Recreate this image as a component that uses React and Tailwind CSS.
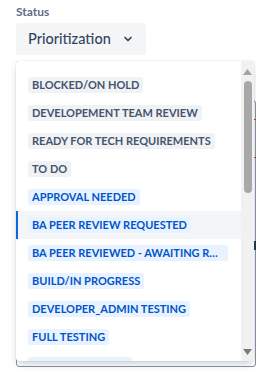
import { ChevronDown } from 'lucide-react';

const items = [
  { label: 'BLOCKED/ON HOLD', tone: 'gray' },
  { label: 'DEVELOPEMENT TEAM REVIEW', tone: 'gray' },
  { label: 'READY FOR TECH REQUIREMENTS', tone: 'gray' },
  { label: 'TO DO', tone: 'gray' },
  { label: 'APPROVAL NEEDED', tone: 'blue' },
  { label: 'BA PEER REVIEW REQUESTED', tone: 'blue', active: true },
  { label: 'BA PEER REVIEWED - AWAITING REQUIREMENTS', tone: 'blue' },
  { label: 'BUILD/IN PROGRESS', tone: 'blue' },
  { label: 'DEVELOPER_ADMIN TESTING', tone: 'blue' },
  { label: 'FULL TESTING', tone: 'blue' },
  { label: 'READY FOR BUILD', tone: 'blue' },
];

const App = () => {
  return (
    <div className="relative w-[256px] h-[374px] bg-white overflow-hidden font-['Lato',sans-serif]">
      <div className="pl-4 pt-[5px]">
        <div className="text-[12px] font-bold text-[#5e6c84] leading-[14px]">Status</div>
        <button className="mt-[4px] w-[130px] h-[32px] rounded-[3px] bg-[#f4f5f7] flex items-center pl-3 text-[14.5px] text-[#344563] font-medium">
          Prioritization
          <ChevronDown size={12} strokeWidth={3.5} className="ml-[11px]" />
        </button>
      </div>

      {/* field behind the menu */}
      <div className="absolute left-4 top-[100px] w-[240px] h-[267px] border border-[#8993a4] rounded-[3px]" />
      <div className="absolute left-[254px] top-[119px] w-[2px] h-px bg-[#de350b]" />
      <div className="absolute left-[254px] top-[157px] w-[2px] h-px bg-[#de350b]" />
      <div className="absolute left-[254px] top-[241px] w-[2px] h-[9px] bg-[#253858]" />

      <div className="absolute left-4 top-[61px] w-[238px] h-[300px] bg-white rounded-[3px] shadow-[0_4px_8px_-2px_rgba(9,30,66,0.25),0_0_1px_rgba(9,30,66,0.31)] flex overflow-hidden">
        <div className="flex-1 pt-[10px] overflow-hidden">
          {items.map(it => (
            <div
              key={it.label}
              className={`h-[28px] flex items-center pl-3 ${it.active ? 'bg-[#f4f5f7] border-l-2 border-[#0c66e4] pl-[10px]' : ''}`}
            >
              <span
                className={`max-w-[200px] truncate h-[16px] leading-[16px] px-1 rounded-[3px] text-[11px] font-bold ${
                  it.tone === 'blue' ? 'bg-[#e9f2ff] text-[#0055cc]' : 'bg-[#f1f2f4] text-[#44546f]'
                }`}
              >
                {it.label}
              </span>
            </div>
          ))}
        </div>
        <div className="w-[13px] bg-[#f1f1f1] flex flex-col items-center">
          <svg width="9" height="6" viewBox="0 0 9 6" className="mt-[8px]">
            <polygon points="4.5,0 9,6 0,6" fill="#a3a3a3" />
          </svg>
          <div className="mt-[6px] w-[8px] h-[112px] rounded-[4px] bg-[#a8a8a8]" />
          <div className="flex-1" />
          <svg width="9" height="6" viewBox="0 0 9 6" className="mb-[6px]">
            <polygon points="0,0 9,0 4.5,6" fill="#7a7a7a" />
          </svg>
        </div>
      </div>
    </div>
  );
};

export default App;
